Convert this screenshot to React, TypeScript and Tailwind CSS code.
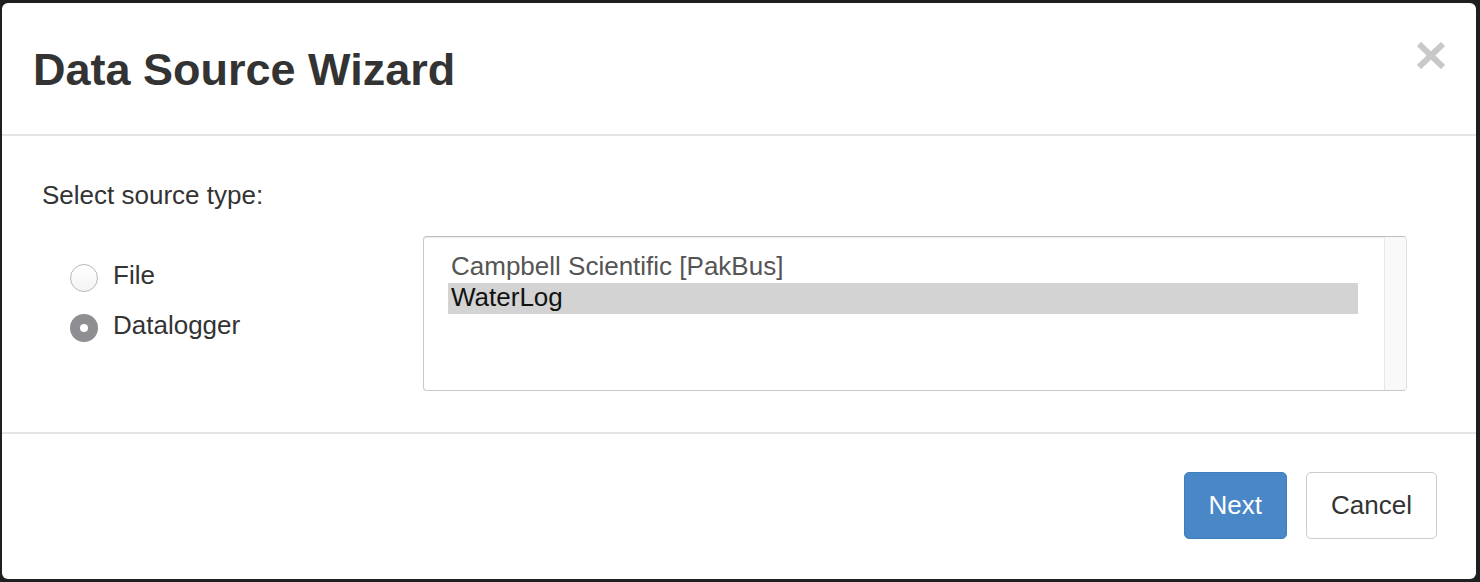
import { useState } from "react";

const sources = ["Campbell Scientific [PakBus]", "WaterLog"];

function Radio({ checked }: { checked: boolean }) {
  return checked ? (
    <span className="flex h-[28px] w-[28px] items-center justify-center rounded-full bg-[#8e8e93]">
      <span className="h-[8px] w-[8px] rounded-full bg-white" />
    </span>
  ) : (
    <span className="h-[28px] w-[28px] rounded-full border border-[#b8b8b8] bg-gradient-to-b from-white to-[#f4f4f4]" />
  );
}

export default function App() {
  const [type, setType] = useState("datalogger");
  const [selected, setSelected] = useState(1);

  return (
    <div
      className="h-[582px] w-[1480px] bg-[#1e1f20] pb-[3px] pl-[2px] pr-[4px] pt-[3px]"
      style={{ fontFamily: '"Liberation Sans", Arial, sans-serif' }}
    >
      <div className="flex h-[576px] flex-col rounded-[6px] bg-white text-[#333]">
        {/* header */}
        <div className="flex h-[133px] items-start justify-between border-b-2 border-[#e5e5e5] pl-[31px] pr-[31px] pt-[44px]">
          <h4 className="text-[45px] font-bold leading-none text-[#333]">Data Source Wizard</h4>
          <button type="button" className="-mt-[5px]">
            <svg width="28" height="27" viewBox="0 0 28 27">
              <line x1="2" y1="2" x2="26" y2="25" stroke="#c8c8c8" strokeWidth="6" />
              <line x1="26" y1="2" x2="2" y2="25" stroke="#c8c8c8" strokeWidth="6" />
            </svg>
          </button>
        </div>

        {/* body */}
        <div className="flex h-[296px] flex-col pl-[40px] pt-[44px]">
          <div className="text-[26px] leading-[30px]">Select source type:</div>
          <div className="mt-[26px] flex">
            <div className="flex w-[381px] flex-col pl-[28px] pt-[17px]">
              {[
                { id: "file", label: "File" },
                { id: "datalogger", label: "Datalogger" },
              ].map((o) => (
                <label
                  key={o.id}
                  onClick={() => setType(o.id)}
                  className="flex h-[50px] cursor-pointer items-center gap-[15px] text-[26px]"
                >
                  <Radio checked={type === o.id} />
                  <span className="pb-[6px]">{o.label}</span>
                </label>
              ))}
            </div>
            <div className="flex h-[155px] w-[984px] overflow-hidden rounded-[4px] border border-r-[#e0e0e0] border-[#c8c8c8] border-t-[#bdbdbd] shadow-[inset_0_1px_1px_rgba(0,0,0,0.075)]">
              <div className="flex-1 pl-[24px] pr-[26px] pt-[15px]">
                {sources.map((s, i) => (
                  <div
                    key={s}
                    onClick={() => setSelected(i)}
                    className={`h-[31px] cursor-default pl-[3px] text-[26px] leading-[28px] ${
                      selected === i ? "bg-[#d3d3d3] text-[#111]" : "text-[#555]"
                    }`}
                  >
                    {s}
                  </div>
                ))}
              </div>
              <div className="w-[22px] border-l border-[#e8e8e8] bg-[#f9f9f9]" />
            </div>
          </div>
        </div>

        {/* footer */}
        <div className="flex flex-1 items-start justify-end gap-[19px] border-t-2 border-[#e5e5e5] pr-[39px] pt-[38px]">
          <button
            type="button"
            className="h-[67px] rounded-[5px] border border-[#3f7fbf] bg-[#4a87c7] px-[24px] text-[26px] text-white"
          >
            Next
          </button>
          <button
            type="button"
            className="h-[67px] rounded-[5px] border border-[#cccccc] bg-white px-[24px] text-[26px] text-[#333]"
          >
            Cancel
          </button>
        </div>
      </div>
    </div>
  );
}
